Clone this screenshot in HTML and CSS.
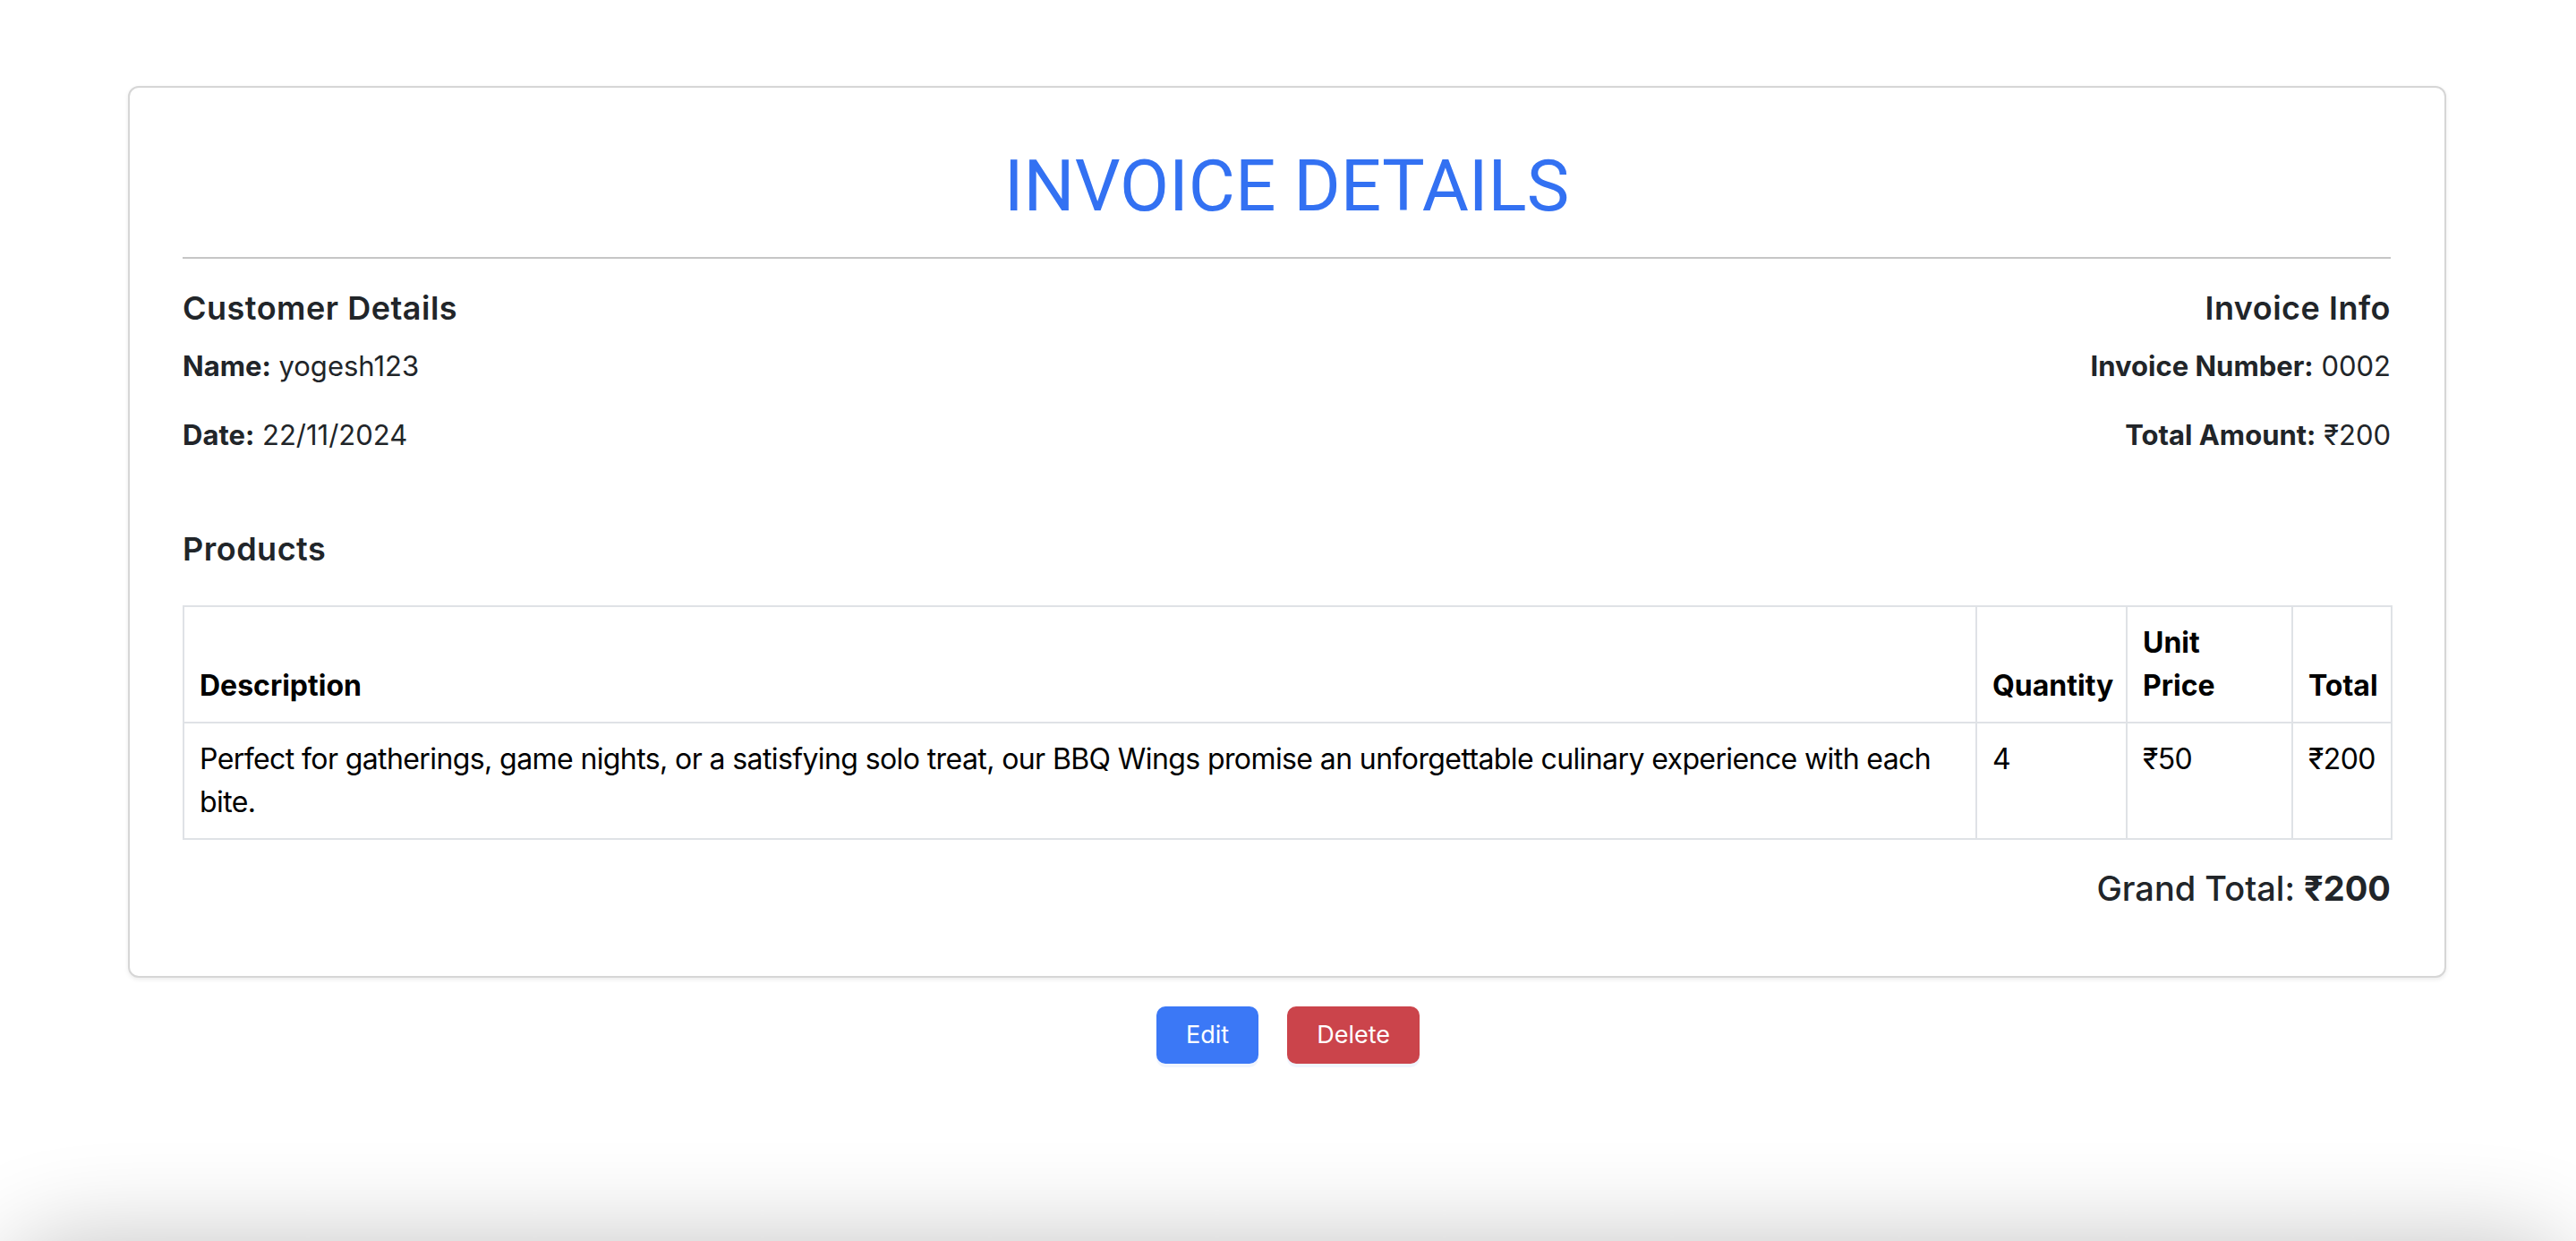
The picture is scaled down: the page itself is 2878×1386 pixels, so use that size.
FILE: index.html
```html
<!DOCTYPE html>
<html lang="en">
<head>
<meta charset="utf-8">
<title>Invoice Details</title>
<link rel="stylesheet" href="styles.css">
</head>
<body>
<main class="page">
  <section class="card">
    <h1 class="title">INVOICE DETAILS</h1>
    <hr class="rule">
    <div class="info">
      <div class="info-col">
        <h5 class="section-title">Customer Details</h5>
        <p class="line"><strong>Name:</strong> yogesh123</p>
        <p class="line"><strong>Date:</strong> 22/11/2024</p>
      </div>
      <div class="info-col info-right">
        <h5 class="section-title">Invoice Info</h5>
        <p class="line"><strong>Invoice Number:</strong> 0002</p>
        <p class="line"><strong>Total Amount:</strong> ₹200</p>
      </div>
    </div>
    <h5 class="section-title products-title">Products</h5>
    <table class="products">
      <colgroup>
        <col class="c-desc">
        <col class="c-qty">
        <col class="c-unit">
        <col class="c-total">
      </colgroup>
      <thead>
        <tr>
          <th>Description</th>
          <th>Quantity</th>
          <th>Unit Price</th>
          <th>Total</th>
        </tr>
      </thead>
      <tbody>
        <tr>
          <td>Perfect for gatherings, game nights, or a satisfying solo treat, our BBQ Wings promise an unforgettable culinary experience with each bite.</td>
          <td>4</td>
          <td>₹50</td>
          <td>₹200</td>
        </tr>
      </tbody>
    </table>
    <div class="grand">Grand Total: <strong>₹200</strong></div>
  </section>
  <div class="actions">
    <button class="btn btn-edit" type="button">Edit</button>
    <button class="btn btn-delete" type="button">Delete</button>
  </div>
</main>
<div class="bottom-shade"></div>
</body>
</html>
```
FILE: styles.css
```css
html, body {
  margin: 0;
  padding: 0;
  background: #ffffff;
}
body {
  font-family: Inter, "Noto Sans", "DejaVu Sans", sans-serif;
  color: #212529;
  overflow: hidden;
  height: 1386px;
}
.page {
  padding-top: 96px;
}
.card {
  margin: 0 145px 0 143px;
  border: 2px solid #d6d6d6;
  border-radius: 12px;
  box-shadow: 0 2px 5px rgba(0, 0, 0, 0.08);
  padding: 62px 60px 75px 59px;
  background: #fff;
}
.title {
  margin: 0;
  font-family: Roboto, "Liberation Sans", sans-serif;
  font-weight: 400;
  font-size: 80px;
  line-height: 96px;
  color: #3371f2;
  text-align: center;
}
.rule {
  margin: 31px 0 35px;
  border: 0;
  border-top: 2px solid #c6c6c6;
  height: 0;
}
.info {
  display: flex;
  justify-content: space-between;
}
.info-right {
  text-align: right;
}
.section-title {
  margin: 0 0 23px;
  font-size: 36px;
  line-height: 40px;
  font-weight: 600;
  letter-spacing: 0.5px;
  color: #212529;
}
.line {
  margin: 0 0 33px;
  font-size: 31px;
  line-height: 44px;
}
.line strong {
  font-weight: 700;
}
.products-title {
  margin-top: 52px;
  margin-bottom: 43px;
}
.products {
  width: 100%;
  border-collapse: collapse;
  table-layout: fixed;
  color: #000;
  font-size: 32px;
  line-height: 48px;
}
.c-desc { width: 2003px; }
.c-qty { width: 168px; }
.c-unit { width: 185px; }
.c-total { width: 111px; }
.products th,
.products td {
  border: 2px solid #dfe2e6;
  padding: 16px 16px 16px 17px;
  text-align: left;
}
.products th {
  font-weight: 700;
  vertical-align: bottom;
}
.products td {
  font-weight: 400;
  vertical-align: top;
  letter-spacing: -0.6px;
}
.grand {
  margin-top: 31px;
  text-align: right;
  font-size: 38px;
  line-height: 46px;
  font-weight: 500;
  color: #212529;
}
.grand strong {
  font-weight: 700;
}
.actions {
  display: flex;
  justify-content: center;
  gap: 32px;
  margin-top: 32px;
}
.btn {
  font-family: Inter, "Noto Sans", sans-serif;
  font-size: 27px;
  line-height: 42px;
  padding: 11px 33px;
  border: 0;
  border-radius: 10px;
  color: #fff;
  box-shadow: 0 4px 0 rgba(59, 130, 246, 0.08);
}
.btn-edit {
  background: #3b78f6;
}
.btn-delete {
  background: #cb444b;
}
.bottom-shade {
  position: fixed;
  left: 0;
  right: 0;
  top: 100%;
  height: 200px;
  border-radius: 80px;
  box-shadow: 0 0 110px 0 rgba(0, 0, 0, 0.24);
}
```
